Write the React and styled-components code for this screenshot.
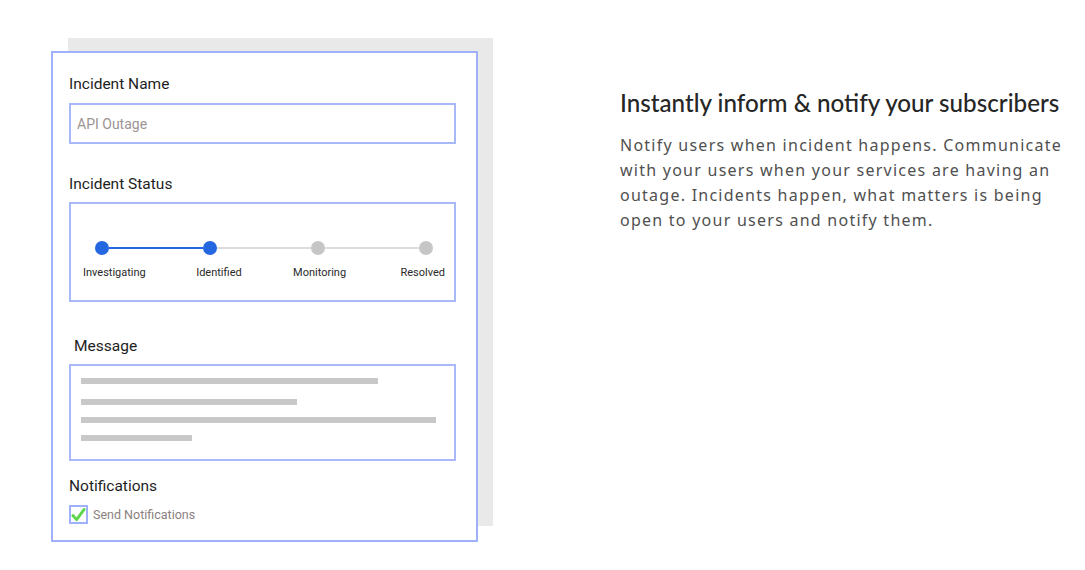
import React from "react";
import styled, { createGlobalStyle } from "styled-components";

const Global = createGlobalStyle`
  html, body { margin: 0; padding: 0; background: #fff; }
  body { font-family: Roboto, "Liberation Sans", sans-serif; }
`;

const Page = styled.div`
  display: flex;
  align-items: flex-start;
  padding: 38px 0 0 68px;
  width: 1085px;
  height: 570px;
  box-sizing: border-box;
`;

const Backdrop = styled.div`
  width: 425px;
  height: 488px;
  background: #e9e9e9;
  flex-shrink: 0;
`;

const Card = styled.div`
  margin: 13px 0 0 -17px;
  width: 427px;
  height: 491px;
  box-sizing: border-box;
  border: 2px solid #9eb1fa;
  background: #fff;
  padding: 22px 0 0 16px;
  display: flex;
  flex-direction: column;
`;

const Label = styled.div`
  font-family: Roboto, "Liberation Sans", sans-serif;
  font-size: 15.5px;
  line-height: 18px;
  color: #1e1e1e;
  margin-top: ${(p) => p.$mt || 0}px;
  padding-left: ${(p) => p.$indent || 0}px;
`;

const Field = styled.div`
  width: 387px;
  height: ${(p) => p.$h}px;
  margin-top: ${(p) => p.$mt || 9}px;
  box-sizing: border-box;
  border: 2px solid #a8b8f9;
  background: #fff;
  flex-shrink: 0;
`;

const InputField = styled(Field)`
  display: flex;
  align-items: center;
  padding-left: 6px;
  font-size: 14px;
  color: #9d9393;
`;

const StatusField = styled(Field)`
  padding-top: 37px;
`;

const Track = styled.div`
  display: flex;
  align-items: center;
  padding: 0 21px 0 24px;
`;

const Dot = styled.div`
  width: 14px;
  height: 14px;
  border-radius: 50%;
  background: ${(p) => (p.$active ? "#2566e1" : "#c6c6c6")};
  flex-shrink: 0;
`;

const Line = styled.div`
  flex: 1;
  height: 2px;
  background: ${(p) => (p.$active ? "#2566e1" : "#dcdcdc")};
`;

const StepLabels = styled.div`
  display: flex;
  justify-content: space-between;
  padding: 0 9px 0 12px;
  margin-top: 11px;
  font-size: 11px;
  line-height: 14px;
  color: #2a2a2a;
`;

const StepLabel = styled.span`
  margin-left: ${(p) => p.$shift || 0}px;
`;

const MessageField = styled(Field)`
  padding: 12px 0 0 10px;
  display: flex;
  flex-direction: column;
`;

const Bar = styled.div`
  height: 6px;
  width: ${(p) => p.$w}px;
  background: #c8c8c8;
  margin-top: ${(p) => p.$mt}px;
`;

const CheckRow = styled.div`
  display: flex;
  align-items: center;
  gap: 5px;
  margin-top: 10px;
  font-size: 12.5px;
  color: #8b7f7f;
`;

const CheckBox = styled.div`
  width: 19px;
  height: 19px;
  box-sizing: border-box;
  border: 2px solid #9eb1fa;
  display: flex;
  align-items: center;
  justify-content: center;
`;

const Info = styled.div`
  margin-left: 127px;
  padding-top: 50px;
  width: 452px;
`;

const Heading = styled.h2`
  margin: 0;
  font-family: Lato, "Liberation Sans", sans-serif;
  font-weight: 500;
  font-size: 24.2px;
  line-height: 30px;
  color: #262626;
  white-space: nowrap;
`;

const Body = styled.p`
  margin: 15px 0 0;
  font-family: "Noto Sans", "Open Sans", sans-serif;
  font-size: 16px;
  line-height: 25px;
  letter-spacing: 1.25px;
  color: #505050;
  width: 452px;
`;

const steps = [
  { name: "Investigating", shift: 0 },
  { name: "Identified", shift: -4 },
  { name: "Monitoring", shift: -3 },
  { name: "Resolved", shift: 0 },
];

export default function App() {
  return (
    <>
      <Global />
      <Page>
        <Backdrop>
          <Card>
            <Label>Incident Name</Label>
            <InputField $h={41} $mt={10}>API Outage</InputField>

            <Label $mt={31}>Incident Status</Label>
            <StatusField $h={100}>
              <Track>
                <Dot $active />
                <Line $active />
                <Dot $active />
                <Line />
                <Dot />
                <Line />
                <Dot />
              </Track>
              <StepLabels>
                {steps.map((s) => (
                  <StepLabel key={s.name} $shift={s.shift}>
                    {s.name}
                  </StepLabel>
                ))}
              </StepLabels>
            </StatusField>

            <Label $mt={35} $indent={5}>Message</Label>
            <MessageField $h={97}>
              <Bar $w={297} $mt={0} />
              <Bar $w={216} $mt={15} />
              <Bar $w={355} $mt={12} />
              <Bar $w={111} $mt={12} />
            </MessageField>

            <Label $mt={16}>Notifications</Label>
            <CheckRow>
              <CheckBox>
                <svg width="16" height="16" viewBox="0 0 16 16">
                  <path
                    d="M2 8.5 L6 13 L14 2"
                    fill="none"
                    stroke="#5ad84a"
                    strokeWidth="3"
                    strokeLinecap="round"
                    strokeLinejoin="round"
                  />
                </svg>
              </CheckBox>
              <span>Send Notifications</span>
            </CheckRow>
          </Card>
        </Backdrop>

        <Info>
          <Heading>Instantly inform &amp; notify your subscribers</Heading>
          <Body>
            Notify users when incident happens. Communicate with your users
            when your services are having an outage. Incidents happen, what
            matters is being open to your users and notify them.
          </Body>
        </Info>
      </Page>
    </>
  );
}
